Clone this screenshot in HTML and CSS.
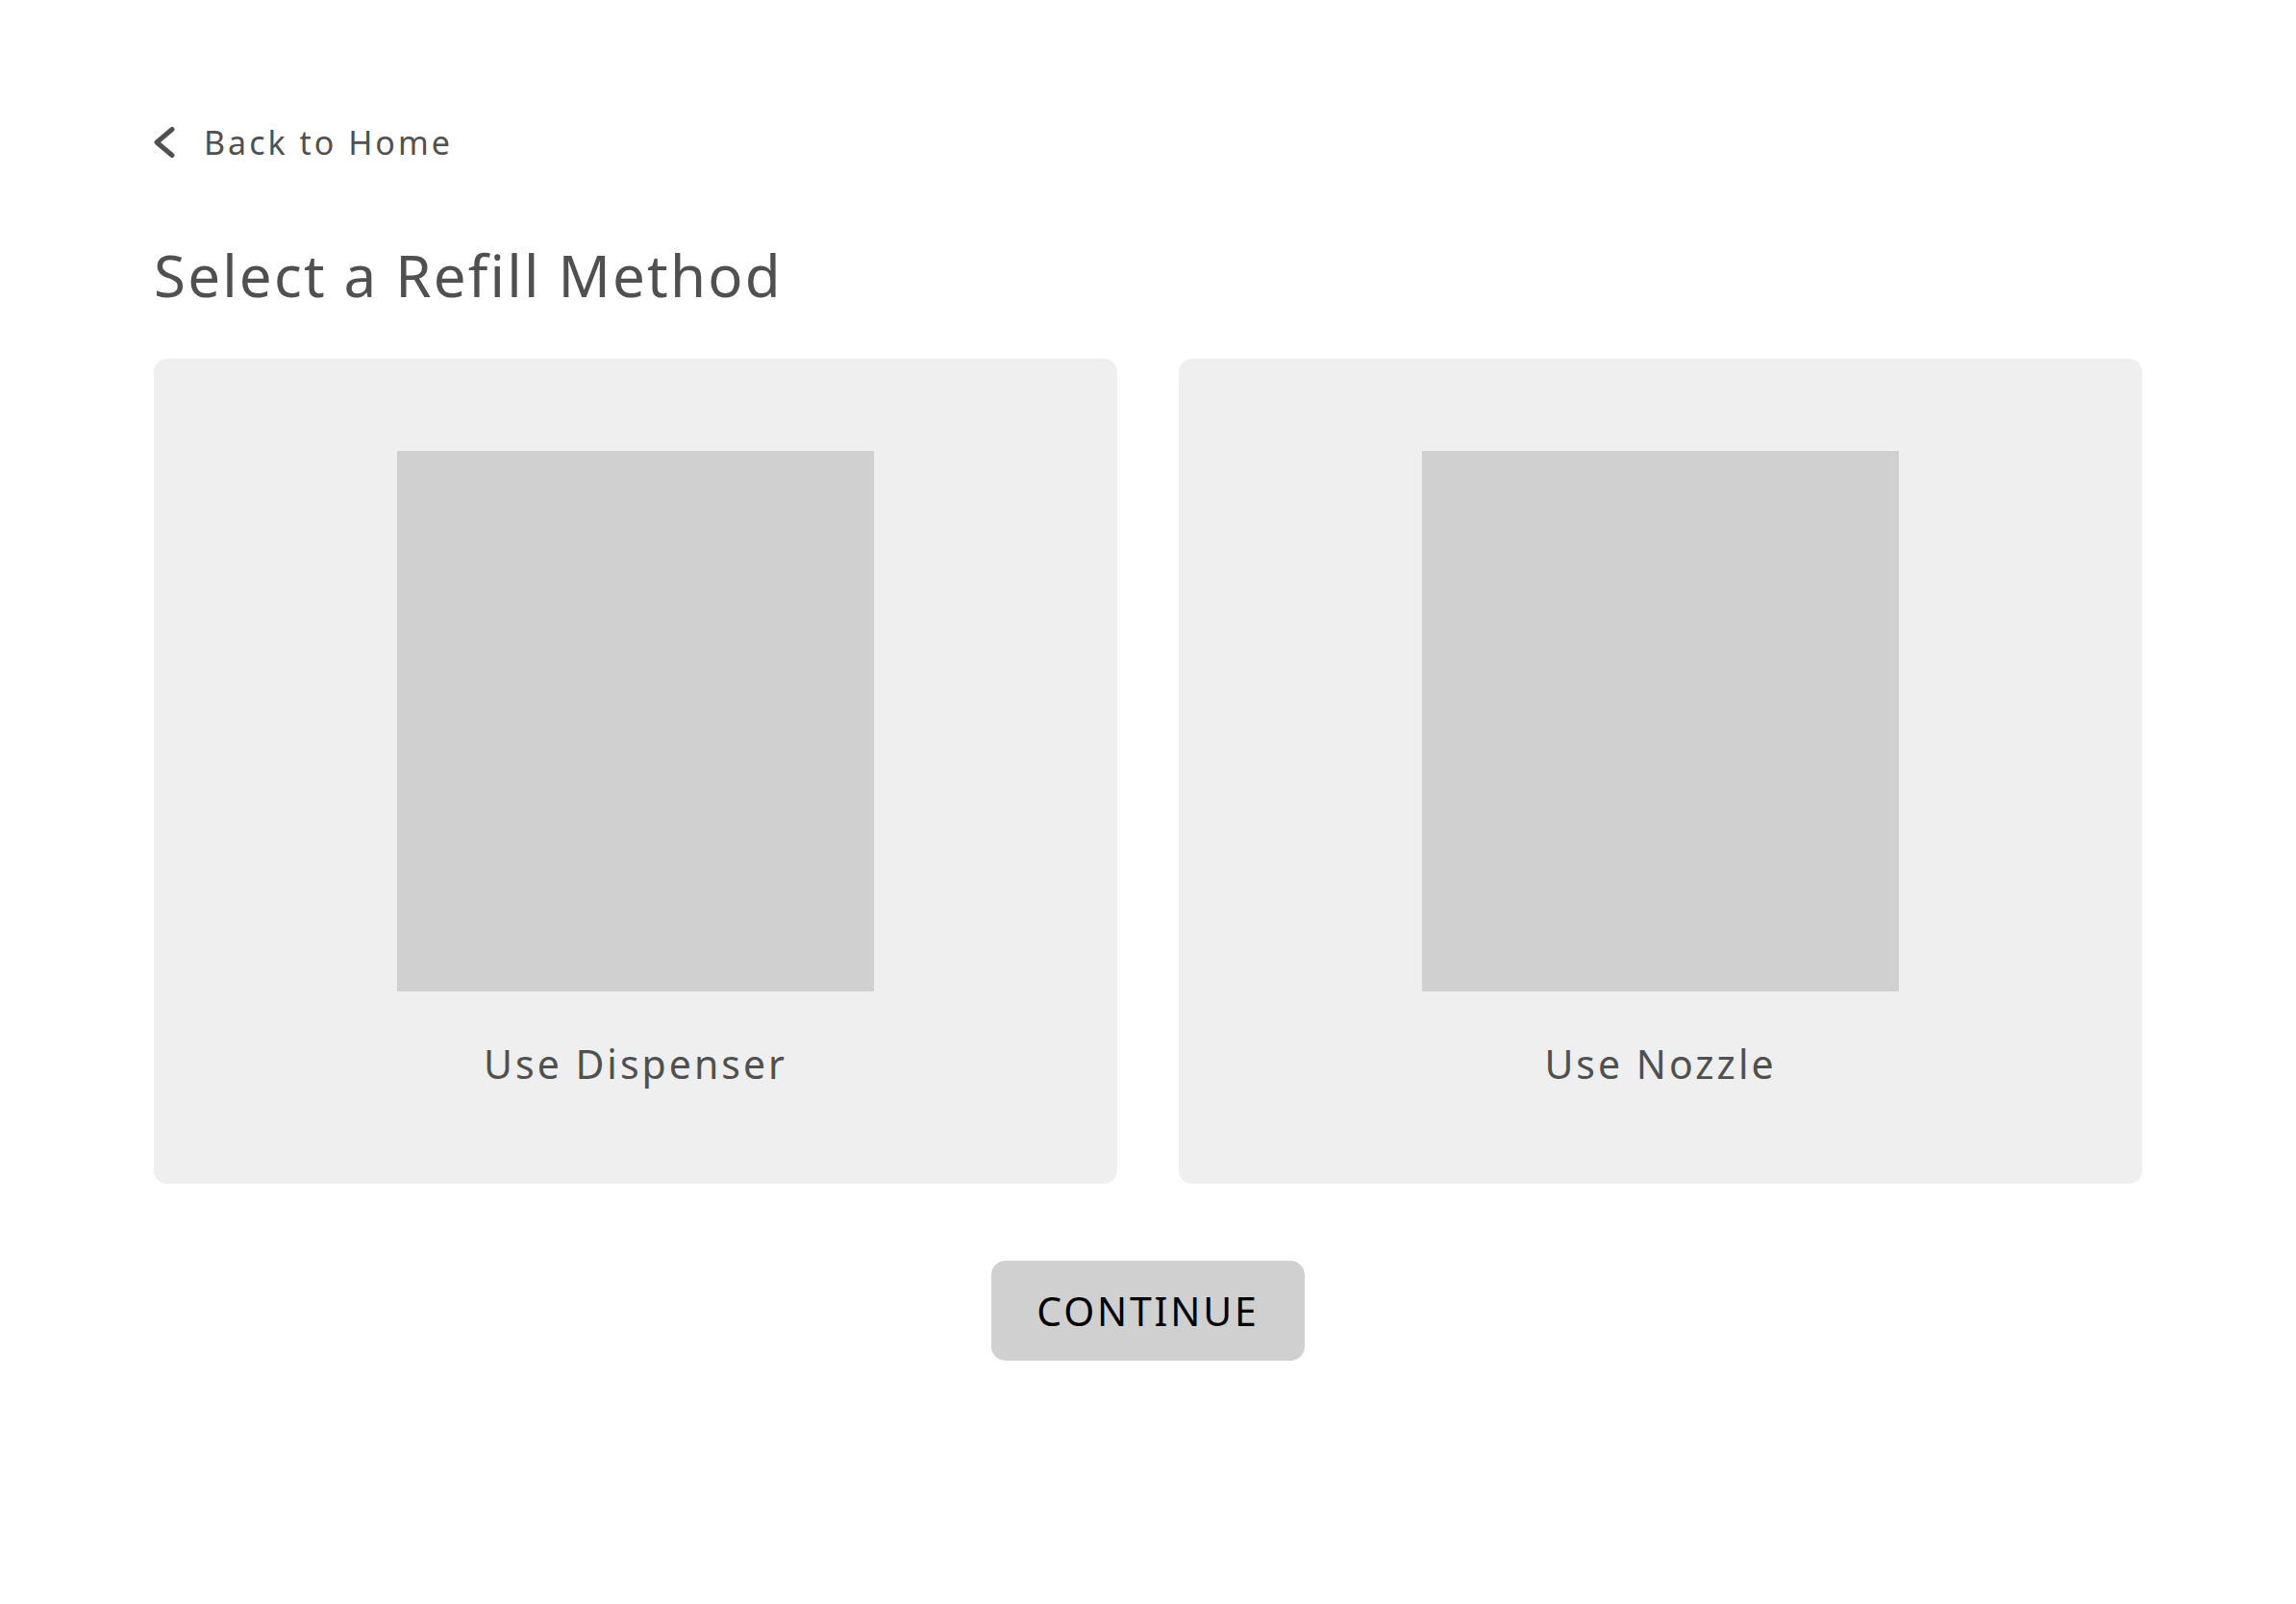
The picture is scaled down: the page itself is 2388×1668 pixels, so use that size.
FILE: index.html
```html
<!DOCTYPE html>
<html lang="en">
<head>
<meta charset="utf-8">
<title>Select a Refill Method</title>
<link rel="stylesheet" href="styles.css">
</head>
<body>
<main class="page">
  <a class="back" href="#">
    <svg class="back-icon" width="24" height="34" viewBox="0 0 24 34" aria-hidden="true">
      <polyline points="20,3.5 4,17 20,30.5" fill="none" stroke="#505050" stroke-width="5" stroke-linecap="round" stroke-linejoin="round"/>
    </svg>
    <span class="back-text">Back to Home</span>
  </a>
  <h1 class="title">Select a Refill Method</h1>
  <section class="options">
    <div class="card">
      <div class="thumb"></div>
      <div class="label">Use Dispenser</div>
    </div>
    <div class="card">
      <div class="thumb"></div>
      <div class="label">Use Nozzle</div>
    </div>
  </section>
  <div class="actions">
    <button class="continue" type="button">CONTINUE</button>
  </div>
</main>
</body>
</html>
```
FILE: styles.css
```css
html, body {
  margin: 0;
  padding: 0;
  background: #ffffff;
}
body {
  font-family: "Noto Sans", "Liberation Sans", sans-serif;
  color: #505050;
}
.page {
  padding: 131px 160px 0 160px;
}
.back {
  display: flex;
  align-items: center;
  gap: 29px;
  text-decoration: none;
  color: #505050;
  height: 34px;
}
.back-icon {
  display: block;
  margin-left: -1px;
}
.back-text {
  font-size: 34px;
  line-height: 1;
  letter-spacing: 3px;
}
.title {
  margin: 91px 0 0 0;
  font-size: 60px;
  line-height: 1;
  font-weight: 400;
  letter-spacing: 2.2px;
  color: #505050;
}
.options {
  margin-top: 57px;
  display: grid;
  grid-template-columns: 1fr 1fr;
  gap: 64px;
}
.card {
  background: #efefef;
  border-radius: 14px;
  padding: 96px 0 104px 0;
  display: flex;
  flex-direction: column;
  align-items: center;
}
.thumb {
  width: 496px;
  height: 562px;
  background: #d0d0d0;
}
.label {
  margin-top: 55px;
  font-size: 41px;
  line-height: 1;
  letter-spacing: 3px;
  color: #505050;
}
.actions {
  display: flex;
  justify-content: center;
  margin-top: 80px;
}
.continue {
  width: 326px;
  height: 104px;
  border: none;
  border-radius: 15px;
  background: #d0d0d0;
  color: #000000;
  font-family: "Noto Sans", "Liberation Sans", sans-serif;
  font-size: 41px;
  line-height: 1;
  letter-spacing: 2.8px;
  padding: 0;
  cursor: pointer;
}
```
